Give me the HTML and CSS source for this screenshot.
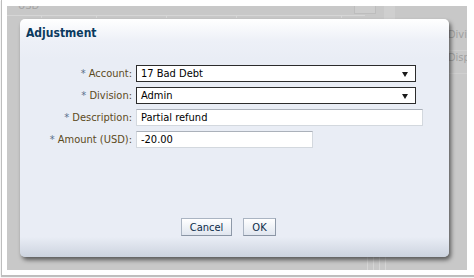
FILE: index.html
```html
<!DOCTYPE html>
<html>
<head>
<meta charset="utf-8">
<link rel="stylesheet" href="styles.css">
</head>
<body>
<div class="frame">
  <div class="screen">
    <div class="page">
      <div class="page-top">
        <span class="usd">USD</span>
        <span class="trash"></span>
        <span class="vbar"></span>
      </div>
      <div class="page-grid">
        <span class="cell c1"></span><span class="cell c2"></span><span class="cell c3"></span><span class="cell c4"></span><span class="cell c5"></span>
      </div>
      <div class="page-side">
        <div class="side-row">Divis</div>
        <div class="side-row">Displa</div>
      </div>
      <div class="page-foot"><span class="fline"></span><span class="fline"></span></div>
    </div>

    <div class="dialog">
      <div class="dlg-title">Adjustment</div>
      <div class="dlg-form">
        <label class="lbl"><span class="req">*</span> Account:</label>
        <div class="select wide">17 Bad Debt<span class="arrow"></span></div>
        <label class="lbl"><span class="req">*</span> Division:</label>
        <div class="select wide">Admin<span class="arrow"></span></div>
        <label class="lbl"><span class="req">*</span> Description:</label>
        <div class="input desc">Partial refund</div>
        <label class="lbl"><span class="req">*</span> Amount (USD):</label>
        <div class="input amt">-20.00</div>
      </div>
      <div class="dlg-buttons">
        <button class="btn cancel">Cancel</button>
        <button class="btn ok">OK</button>
      </div>
    </div>
  </div>
</div>
</body>
</html>
```

FILE: styles.css
```css
html, body {
  margin: 0;
  padding: 0;
  background: #ffffff;
}
body {
  width: 474px;
  height: 278px;
  overflow: hidden;
  font-family: "DejaVu Sans", Tahoma, sans-serif;
  font-stretch: condensed;
  font-size: 11px;
}
.frame {
  margin-left: 1px;
  width: 466px;
  height: 269px;
  padding: 6px 5px 0 5px;
  background: #ffffff;
  border: 1px solid #bdbdbd;
  border-top: none;
  box-shadow: 0 1px 1px rgba(0,0,0,0.25);
}
.screen {
  position: relative;
  width: 460px;
  height: 264px;
  background: #c8c8c8;
  overflow: hidden;
}
.page {
  color: #9c9c9c;
}
.page-top {
  height: 9px;
  display: flex;
  position: relative;
}
.usd {
  margin-left: 11px;
  margin-top: -7px;
  font-size: 11px;
  color: #a4a4a4;
}
.trash {
  margin-left: 315px;
  margin-top: -6px;
  width: 20px;
  height: 12px;
  border: 1px solid #bdbdbd;
  background: #cdcdcd;
}
.vbar {
  margin-left: 8px;
  margin-top: 0;
  width: 11px;
  height: 14px;
  background: #cfcfcf;
}
.page-grid {
  width: 358px;
  height: 2px;
  border-top: 1px solid #d6d6d6;
  display: flex;
}
.cell { height: 2px; border-right: 1px solid #d6d6d6; }
.c1 { width: 34px; }
.c2 { width: 54px; }
.c3 { width: 69px; }
.c4 { width: 69px; }
.c5 { width: 104px; }
.page-side {
  position: absolute;
  left: 441px;
  top: 22px;
  font-size: 11px;
}
.side-row {
  height: 22px;
  line-height: 14px;
  padding-top: 0;
  border-bottom: 1px solid #d0d0d0;
  color: #a0a0a0;
}
.page-foot {
  position: absolute;
  left: 360px;
  top: 250px;
  display: flex;
  gap: 5px;
}
.fline {
  width: 5px;
  height: 14px;
  border-left: 1px solid #d6d6d6;
  border-right: 1px solid #d6d6d6;
}

/* dialog */
.dialog {
  position: absolute;
  left: 13px;
  top: 13px;
  width: 429px;
  height: 238px;
  border-radius: 5px;
  background: linear-gradient(to bottom, #ffffff 0px, #edf0f7 22px, #e9edf5 40px, #e9edf5 218px, #ccd3df 238px);
  box-shadow: 2px 3px 4px rgba(0,0,0,0.55);
  display: flex;
  flex-direction: column;
}
.dlg-title {
  padding: 7px 6px 0 6px;
  height: 19px;
  font-weight: bold;
  font-size: 12px;
  color: #0b3a5e;
}
.dlg-form {
  margin-top: 20px;
  display: grid;
  grid-template-columns: 112px auto;
  column-gap: 4px;
  row-gap: 5px;
  align-items: center;
  justify-items: start;
}
.lbl {
  justify-self: end;
  color: #5c4a1c;
  white-space: nowrap;
}
.req { color: #5b708c; }
.select, .input {
  box-sizing: border-box;
  height: 17px;
  line-height: 15px;
  padding-left: 4px;
  color: #000000;
  background: #ffffff;
  position: relative;
}
.select {
  border: 1px solid #2c2c2c;
}
.wide { width: 280px; }
.arrow {
  position: absolute;
  right: 7px;
  top: 6px;
  width: 0;
  height: 0;
  border-left: 3px solid transparent;
  border-right: 3px solid transparent;
  border-top: 5px solid #1a1a1a;
}
.input {
  border: 1px solid #d3d8de;
  border-top-color: #abb1ba;
}
.desc { width: 287px; }
.amt { width: 177px; }
.dlg-buttons {
  margin-top: auto;
  margin-bottom: 21px;
  padding-left: 161px;
  display: flex;
  gap: 11px;
}
.btn {
  box-sizing: border-box;
  height: 18px;
  padding: 0;
  font-family: inherit;
  font-stretch: condensed;
  font-size: 11px;
  color: #0c2b48;
  background: linear-gradient(to bottom, #ffffff, #e0e6ef);
  border: 1px solid #aab4c2;
  border-right-color: #8e99a8;
  border-bottom-color: #8a95a4;
}
.cancel { width: 51px; }
.ok { width: 33px; }
```
